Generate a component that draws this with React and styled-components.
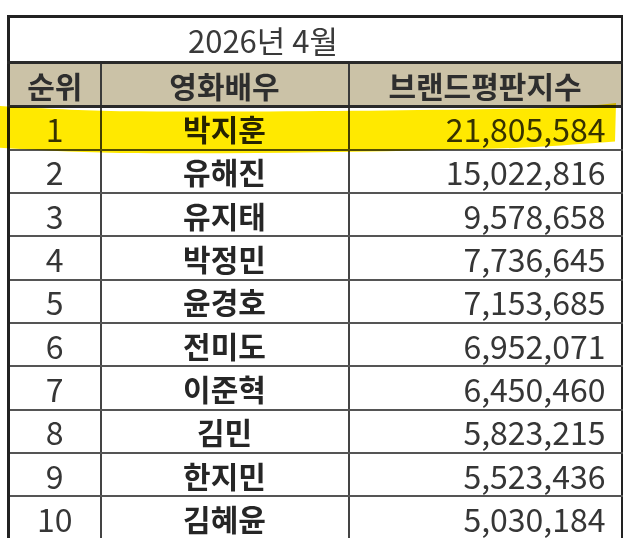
import React from "react";
import styled, { createGlobalStyle } from "styled-components";

const GlobalStyle = createGlobalStyle`
  html, body {
    margin: 0;
    padding: 0;
    background: #ffffff;
  }
  body {
    font-family: "Noto Sans CJK KR", "Noto Sans", sans-serif;
    color: #333;
  }
`;

const rows = [
  { rank: 1, name: "박지훈", score: "21,805,584" },
  { rank: 2, name: "유해진", score: "15,022,816" },
  { rank: 3, name: "유지태", score: "9,578,658" },
  { rank: 4, name: "박정민", score: "7,736,645" },
  { rank: 5, name: "윤경호", score: "7,153,685" },
  { rank: 6, name: "전미도", score: "6,952,071" },
  { rank: 7, name: "이준혁", score: "6,450,460" },
  { rank: 8, name: "김민", score: "5,823,215" },
  { rank: 9, name: "한지민", score: "5,523,436" },
  { rank: 10, name: "김혜윤", score: "5,030,184" },
];

const App = () => {
  return (
    <>
      <GlobalStyle />
      <Page>
        <Sheet>
          <Table>
            <colgroup>
              <col style={{ width: 92 }} />
              <col style={{ width: 248 }} />
              <col style={{ width: 273 }} />
            </colgroup>
            <thead>
              <tr>
                <TitleCell colSpan={3}>2026년 4월</TitleCell>
              </tr>
              <HeadRow>
                <HeadCell>순위</HeadCell>
                <HeadCell>영화배우</HeadCell>
                <HeadCell>브랜드평판지수</HeadCell>
              </HeadRow>
            </thead>
            <tbody>
              {rows.map((r) => (
                <Row key={r.rank}>
                  <RankCell>{r.rank}</RankCell>
                  <NameCell>{r.name}</NameCell>
                  <ScoreCell>{r.score}</ScoreCell>
                </Row>
              ))}
            </tbody>
          </Table>
          {/* highlighter marker stroke over the first place row */}
          <Highlight viewBox="0 0 620 50" preserveAspectRatio="none">
            <path
              d="M0,3 C40,5 70,7 120,8 C250,9 420,7 540,5 C575,4 600,2 616,0 L615,37 C590,39 560,41 520,43 C400,47 250,49 120,48 C70,47 30,45 0,43 Z"
              fill="#ffe900"
            />
          </Highlight>
        </Sheet>
      </Page>
    </>
  );
};

const Page = styled.div`
  width: 623px;
  height: 538px;
  overflow: hidden;
  padding: 15px 0 0 7px;
  box-sizing: border-box;
`;

const Sheet = styled.div`
  position: relative;
  width: 613px;
`;

const Table = styled.table`
  width: 613px;
  table-layout: fixed;
  border-collapse: collapse;
  border-left: 3px solid #222;
  border-right: 2px solid #222;
  border-top: 3px solid #222;
`;

const TitleCell = styled.th`
  height: 43px;
  padding: 0 0 0 178px;
  text-align: left;
  font-weight: 400;
  font-size: 31px;
  color: #3a3a3a;
  background: #fff;
  border-bottom: 3px solid #2a2a2a;
  line-height: 1;
`;

const HeadRow = styled.tr`
  background: #cbc2a7;
`;

const HeadCell = styled.th`
  height: 41px;
  padding: 0;
  font-weight: 700;
  font-size: 30px;
  color: #2e2e2e;
  text-align: center;
  border-left: 2px solid #3a3a3a;
  border-bottom: 3px solid #2a2a2a;
  line-height: 1;
  &:first-child {
    border-left: none;
  }
`;

const Row = styled.tr`
  height: 43.3px;
`;

const Cell = styled.td`
  padding: 0;
  line-height: 1;
  color: #363636;
  border-left: 2px solid #444;
  border-bottom: 2px solid #555;
  &:first-child {
    border-left: none;
  }
`;

const RankCell = styled(Cell)`
  text-align: center;
  font-size: 32px;
`;

const NameCell = styled(Cell)`
  text-align: center;
  font-size: 30px;
  font-weight: 700;
  color: #262626;
`;

const ScoreCell = styled(Cell)`
  text-align: right;
  padding-right: 15px;
  font-size: 32px;
`;

const Highlight = styled.svg`
  position: absolute;
  left: -7px;
  top: 88px;
  width: 620px;
  height: 52px;
  mix-blend-mode: multiply;
  pointer-events: none;
`;

export default App;
